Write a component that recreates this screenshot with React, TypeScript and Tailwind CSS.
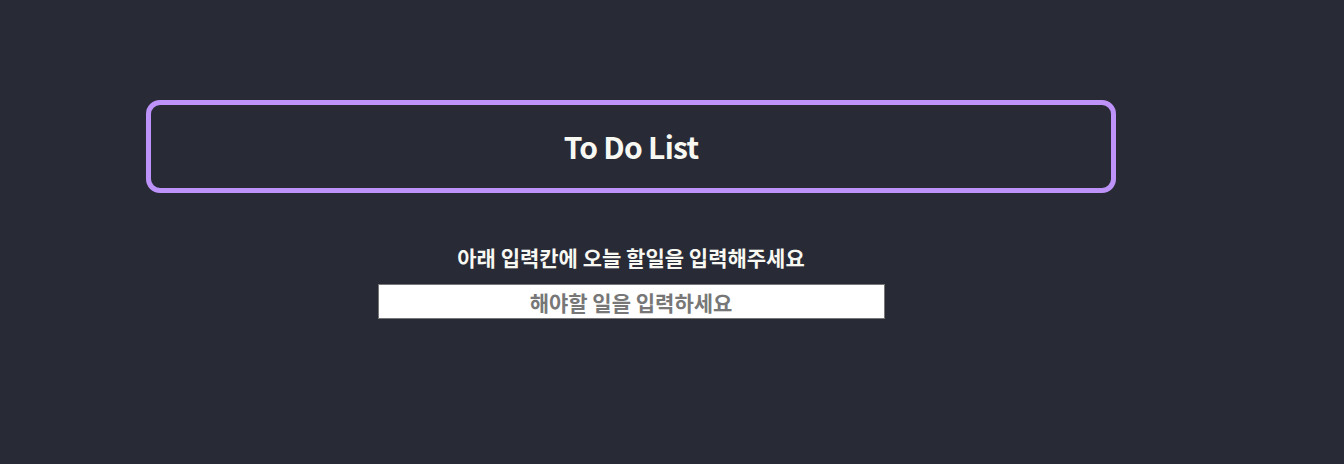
import React from 'react';

const App: React.FC = () => {
  return (
    <div
      className="min-h-[464px] w-full bg-[#282a36] pt-[100px]"
      style={{ fontFamily: '"Noto Sans CJK KR", "Noto Sans", sans-serif' }}
    >
      <div className="w-[1262px] flex flex-col items-center">
        {/* Title */}
        <div className="w-[970px] h-[93px] border-[5px] border-[#bd93f9] rounded-[14px] flex items-center justify-center">
          <h1 className="text-[30px] font-bold text-[#f8f8f2] tracking-tight">To Do List</h1>
        </div>

        {/* Input */}
        <p className="mt-[49px] text-[21px] leading-[30px] font-bold text-[#f8f8f2] tracking-normal">
          아래 입력칸에 오늘 할일을 입력해주세요
        </p>
        <input
          type="text"
          placeholder="해야할 일을 입력하세요"
          className="mt-[12px] w-[507px] h-[35px] bg-white border border-[#767676] text-center text-[21px] font-bold placeholder:text-[#777777] outline-none"
        />
      </div>
    </div>
  );
};

export default App;
